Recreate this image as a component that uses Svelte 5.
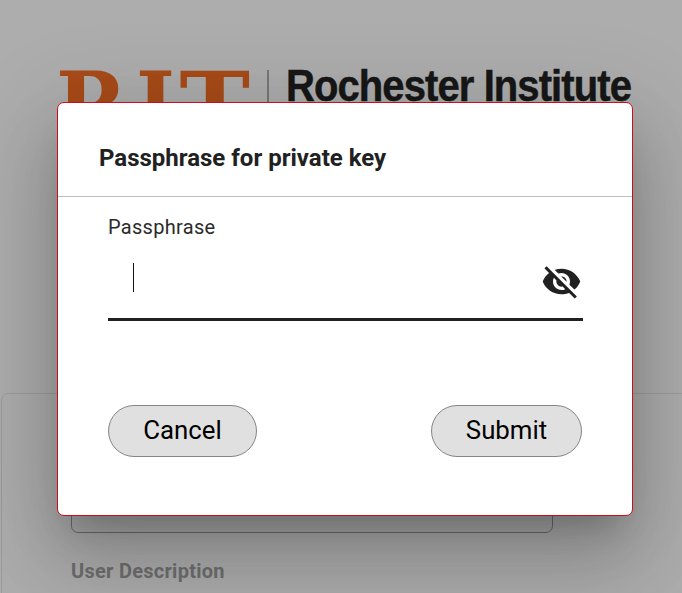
<script>
  let passphrase = $state('');
</script>

<div class="page">
  <header class="brand">
    <svg width="682" height="140" viewBox="0 0 682 140" aria-label="RIT Rochester Institute">
      <g class="mark">
        <text x="56" y="138.5" textLength="71" lengthAdjust="spacingAndGlyphs">R</text>
        <text x="136" y="138.5" textLength="39" lengthAdjust="spacingAndGlyphs">I</text>
        <text x="179.5" y="138.5" textLength="70.5" lengthAdjust="spacingAndGlyphs">T</text>
      </g>
      <path d="M268 70V140" stroke="#6b6b6b" stroke-width="1.6" />
      <text class="name" x="286" y="101" textLength="345" lengthAdjust="spacingAndGlyphs">Rochester Institute</text>
    </svg>
  </header>
  <section class="panel">
    <div class="field"></div>
    <h2>User Description</h2>
  </section>

  <div class="overlay">
    <div class="dialog" role="dialog" aria-modal="true" aria-labelledby="title">
      <h1 id="title">Passphrase for private key</h1>
      <div class="body">
        <div class="label">Passphrase</div>
        <div class="entry">
          <div class="value">{passphrase}<span class="caret"></span></div>
          <svg class="eye" viewBox="0 0 24 24" aria-hidden="true">
            <path d="M12 7c2.76 0 5 2.24 5 5 0 .65-.13 1.26-.36 1.83l2.92 2.92c1.51-1.26 2.7-2.89 3.43-4.75-1.73-4.39-6-7.5-11-7.5-1.4 0-2.74.25-3.98.7l2.16 2.16C10.74 7.13 11.35 7 12 7zM2 4.27l2.28 2.28.46.46C3.08 8.3 1.78 10.02 1 12c1.73 4.39 6 7.5 11 7.5 1.55 0 3.03-.3 4.38-.84l.42.42L19.73 22 21 20.73 3.27 3 2 4.27zM7.53 9.8l1.55 1.55c-.05.21-.08.43-.08.65 0 1.66 1.34 3 3 3 .22 0 .44-.03.65-.08l1.55 1.55c-.67.33-1.41.53-2.2.53-2.76 0-5-2.24-5-5 0-.79.2-1.53.53-2.2zm4.31-.78l3.15 3.15.02-.16c0-1.66-1.34-3-3-3l-.17.01z" />
          </svg>
        </div>
        <div class="actions">
          <button class="cancel" type="button">Cancel</button>
          <button class="submit" type="button">Submit</button>
        </div>
      </div>
    </div>
  </div>
</div>

<style>
  .page {
    position: relative;
    width: 682px;
    height: 593px;
    overflow: hidden;
    background: #adadad;
    font-family: Roboto, "Liberation Sans", sans-serif;
    color: #212121;
  }
  .brand { height: 393px; }
  .brand svg { display: block; }
  .mark {
    font-family: "DejaVu Serif", serif;
    font-weight: 700;
    font-size: 94px;
    fill: #a84b18;
  }
  .name {
    font-family: "Liberation Sans", sans-serif;
    font-weight: 700;
    font-size: 43.5px;
    letter-spacing: -1px;
    fill: #171717;
    stroke: #171717;
    stroke-width: 0.5px;
  }
  .panel {
    box-sizing: border-box;
    width: 700px;
    height: 220px;
    margin-left: 1px;
    padding: 89px 0 0 69px;
    border: 1px solid #9c9c9c;
    border-radius: 7px;
  }
  .field {
    box-sizing: border-box;
    width: 482px;
    height: 50px;
    border: 1px solid #6b6e72;
    border-radius: 7px;
  }
  h2 {
    margin: 26px 0 0;
    font-size: 20px;
    line-height: 24px;
    font-weight: 700;
    letter-spacing: 0.27px;
    color: #6f6f6f;
  }
  .overlay {
    position: absolute;
    inset: 0;
    padding: 102px 0 0 57px;
  }
  .dialog {
    box-sizing: border-box;
    width: 576px;
    height: 414px;
    border: 1px solid #c8101c;
    border-radius: 7px;
    background: #fff;
    box-shadow:
      0 22px 30px -14px rgba(0, 0, 0, 0.2),
      0 48px 76px 6px rgba(0, 0, 0, 0.14),
      0 18px 92px 16px rgba(0, 0, 0, 0.12);
  }
  h1 {
    box-sizing: border-box;
    height: 94px;
    margin: 0;
    padding: 39px 0 0 41px;
    border-bottom: 1px solid #bdbfc2;
    font-size: 24px;
    line-height: 32px;
    font-weight: 700;
  }
  .body { padding: 16px 49px 0 50px; }
  .label {
    font-size: 20px;
    line-height: 28px;
    letter-spacing: 0.3px;
    color: #2b2b2b;
  }
  .entry {
    box-sizing: border-box;
    display: flex;
    justify-content: space-between;
    height: 80px;
    padding: 20px 1px 0 25px;
    border-bottom: 3px solid #212121;
  }
  .value { display: flex; height: 30px; padding-top: 2px; }
  .caret { width: 1px; height: 29px; background: #111; }
  .eye {
    width: 41px;
    height: 41px;
    fill: #212121;
  }
  .actions {
    display: flex;
    justify-content: space-between;
    padding: 84px 1px 0 0;
  }
  button {
    box-sizing: border-box;
    height: 52px;
    margin: 0;
    padding: 0 0 2px;
    border: 1px solid #858585;
    border-radius: 26px;
    background: #e0e0e0;
    color: #000;
    font: 400 25.8px/48px Roboto, sans-serif;
  }
  .cancel { width: 149px; }
  .submit { width: 151px; }
</style>
